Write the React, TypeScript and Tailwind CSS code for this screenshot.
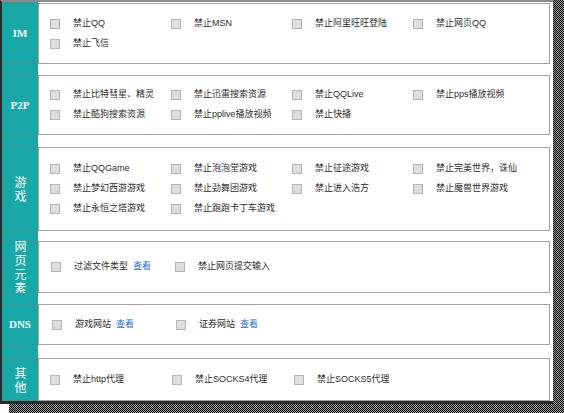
import React from "react";

type Item = { label: string; link?: boolean };
type Section = {
  key: string;
  title: string;
  latin: boolean;
  boxH: string;
  gapAfter: string;
  cols: string;
  pad: string;
  items: Item[];
};

const sections: Section[] = [
  {
    key: "im",
    title: "IM",
    latin: true,
    boxH: "h-[61px]",
    gapAfter: "h-[11px]",
    cols: "grid-cols-[121px_121px_121px_121px]",
    pad: "pl-[11px]",
    items: [
      { label: "禁止QQ" },
      { label: "禁止MSN" },
      { label: "禁止阿里旺旺登陆" },
      { label: "禁止网页QQ" },
      { label: "禁止飞信" },
    ],
  },
  {
    key: "p2p",
    title: "P2P",
    latin: true,
    boxH: "h-[60px]",
    gapAfter: "h-[12px]",
    cols: "grid-cols-[121px_121px_121px_121px]",
    pad: "pl-[11px]",
    items: [
      { label: "禁止比特彗星、精灵" },
      { label: "禁止迅雷搜索资源" },
      { label: "禁止QQLive" },
      { label: "禁止pps播放视频" },
      { label: "禁止酷狗搜索资源" },
      { label: "禁止pplive播放视频" },
      { label: "禁止快播" },
    ],
  },
  {
    key: "game",
    title: "游戏",
    latin: false,
    boxH: "h-[84px]",
    gapAfter: "h-[10px]",
    cols: "grid-cols-[121px_121px_121px_121px]",
    pad: "pl-[11px]",
    items: [
      { label: "禁止QQGame" },
      { label: "禁止泡泡堂游戏" },
      { label: "禁止征途游戏" },
      { label: "禁止完美世界，诛仙" },
      { label: "禁止梦幻西游游戏" },
      { label: "禁止劲舞团游戏" },
      { label: "禁止进入浩方" },
      { label: "禁止魔兽世界游戏" },
      { label: "禁止永恒之塔游戏" },
      { label: "禁止跑跑卡丁车游戏" },
    ],
  },
  {
    key: "web",
    title: "网页元素",
    latin: false,
    boxH: "h-[52px]",
    gapAfter: "h-[11px]",
    cols: "grid-cols-[124px_124px]",
    pad: "pl-[12px]",
    items: [{ label: "过滤文件类型", link: true }, { label: "禁止网页提交输入" }],
  },
  {
    key: "dns",
    title: "DNS",
    latin: true,
    boxH: "h-[41px]",
    gapAfter: "h-[13px]",
    cols: "grid-cols-[124px_124px]",
    pad: "pl-[13px]",
    items: [
      { label: "游戏网站", link: true },
      { label: "证券网站", link: true },
    ],
  },
  {
    key: "other",
    title: "其他",
    latin: false,
    boxH: "h-[43px]",
    gapAfter: "h-0",
    cols: "grid-cols-[122px_122px_122px]",
    pad: "pl-[11px]",
    items: [
      { label: "禁止http代理" },
      { label: "禁止SOCKS4代理" },
      { label: "禁止SOCKS5代理" },
    ],
  },
];

const checker =
  "bg-[repeating-conic-gradient(#000_0_25%,#9c9c9c_0_50%)] bg-[length:2px_2px]";

function Check() {
  return (
    <span className="inline-block w-[10px] h-[10px] shrink-0 border border-[#b4b4b4] bg-[#dedede] mr-[13px]" />
  );
}

export default function App() {
  return (
    <div
      className="w-[564px] h-[413px] bg-white flex flex-col overflow-hidden"
      style={{ fontFamily: '"Liberation Sans", "Noto Sans CJK SC", sans-serif' }}
    >
      <div className="flex h-[404px]">
        <div className="w-[553px] h-[404px] flex flex-col border-l-2 border-l-[#2c2c2c] border-t-2 border-t-[#8c8c8c] border-b-[3px] border-b-[#2a2a2a]">
          <div className="flex h-[1px]">
            <div className="w-[36px] bg-[#17a8a7]" />
            <div className="flex-1" />
          </div>
          {sections.map((s) => (
            <React.Fragment key={s.key}>
              <div className={`flex ${s.boxH}`}>
                <div className="w-[36px] bg-[#17a8a7] border-y border-[#4c8f8e] flex flex-col items-center justify-center text-white">
                  {s.latin ? (
                    <span
                      className="text-[11px] font-bold leading-none"
                      style={{ fontFamily: '"Liberation Serif", serif' }}
                    >
                      {s.title}
                    </span>
                  ) : (
                    <span
                      className="[writing-mode:vertical-rl] whitespace-nowrap shrink-0 text-[12px] leading-none tracking-[2px] pt-[2px]"
                      style={{ fontFamily: '"Noto Sans CJK SC", sans-serif' }}
                    >
                      {s.title}
                    </span>
                  )}
                </div>
                <div className="w-[512px] border border-[#a2a2a2] flex flex-col justify-center">
                  <div className={`grid ${s.cols} ${s.pad}`}>
                    {s.items.map((it, i) => (
                      <div key={i} className="h-[20px] flex items-center text-[9px] text-[#2e2e2e] whitespace-nowrap">
                        <Check />
                        <span>{it.label}</span>
                        {it.link && <span className="ml-[5px] text-[#1f6fd1]">查看</span>}
                      </div>
                    ))}
                  </div>
                </div>
                <div className="flex-1" />
              </div>
              {s.gapAfter !== "h-0" && (
                <div className={`flex ${s.gapAfter}`}>
                  <div className="w-[36px] bg-[#17a8a7]" />
                  <div className="flex-1" />
                </div>
              )}
            </React.Fragment>
          ))}
        </div>
        <div className={`w-[11px] h-[404px] ${checker}`} />
      </div>
      <div className="flex h-[9px]">
        <div className="w-[9px]" />
        <div className={`flex-1 ${checker}`} />
      </div>
    </div>
  );
}
